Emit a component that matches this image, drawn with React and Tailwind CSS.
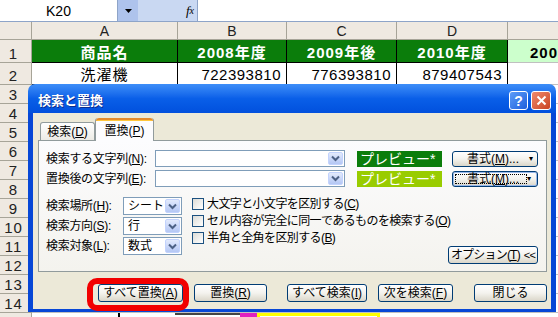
import React from 'react';

const U = ({ children }) => <span className="underline underline-offset-[1px]">{children}</span>;

const Chevron = () => (
  <svg width="9" height="7" viewBox="0 0 9 7">
    <path d="M1 1.5 L4.5 5 L8 1.5" fill="none" stroke="#4d6185" strokeWidth="2" />
  </svg>
);

const DropBtn = () => (
  <div className="flex h-full w-[15px] items-center justify-center rounded-[2px] border border-[#c3d3fd] bg-gradient-to-b from-[#e3eafc] to-[#b4c7f4]">
    <Chevron />
  </div>
);

const Combo = ({ className, text }) => (
  <div className={`flex shrink-0 items-stretch border border-[#7f9db9] bg-white p-[1px] ${className}`}>
    <div className="flex flex-1 items-center pl-[3px] text-[12px] leading-none">{text}</div>
    <DropBtn />
  </div>
);

const XpButton = ({ className, children }) => (
  <div
    className={`flex shrink-0 items-center justify-center whitespace-nowrap rounded-[3px] border border-[#003c74] bg-gradient-to-b from-white via-[#f4f3ee] to-[#dad6c9] text-[12px] leading-none text-black ${className}`}
  >
    {children}
  </div>
);

const Checkbox = ({ children }) => (
  <div className="flex h-[17px] items-center whitespace-nowrap text-[12px] leading-none tracking-[-0.6px]">
    <div className="mr-[2px] h-[12px] w-[12px] shrink-0 border border-[#1c5180] bg-gradient-to-br from-[#dcdcd7] to-white" />
    <span className="ml-[1px]">{children}</span>
  </div>
);

const cols = [146, 109, 110, 111, 120];
const colNames = ['A', 'B', 'C', 'D', 'E'];

const Cell = ({ w, className, children }) => (
  <div style={{ width: w }} className={`flex shrink-0 items-end overflow-hidden whitespace-nowrap border-r border-b pb-[2px] ${className}`}>
    {children}
  </div>
);

const RowHead = ({ h, n }) => (
  <div
    style={{ height: h }}
    className="flex w-[32px] shrink-0 items-end justify-center border-r border-b border-[#a7a498] bg-[#efe9e1] pb-[1px] pr-[4px] text-[15px] leading-none tracking-[1px] text-[#222]"
  >
    {n}
  </div>
);

export default function App() {
  const bodyRows = [3, 4, 5, 6, 7, 8, 9, 10, 11, 12, 13, 14];

  return (
    <div className="relative h-[317px] w-[558px] overflow-hidden bg-white font-['Liberation_Sans','Noto_Sans_CJK_JP',sans-serif] text-black">
      {/* formula bar */}
      <div className="flex h-[22px] border-b border-[#8ea4c8] bg-[#c9d8f2]">
        <div className="flex w-[118px] items-center justify-center border-r border-[#8ea4c8] bg-white text-[14px] leading-none">
          K20
        </div>
        <div className="flex w-[20px] items-center justify-center bg-[#aec3ec]">
          <svg width="7" height="4" viewBox="0 0 7 4">
            <path d="M0 0 H7 L3.5 4 Z" fill="#000" />
          </svg>
        </div>
        <div className="flex w-[59px] items-center justify-end pr-[3px] font-['Liberation_Serif',serif] text-[13px] italic leading-none">
          f<span className="text-[10px]">x</span>
        </div>
        <div className="flex-1 border-l border-[#8ea4c8] bg-white" />
      </div>

      {/* column headers */}
      <div className="flex h-[18px]">
        <div className="w-[32px] shrink-0 border-r border-b border-[#a7a498] bg-[#efe9e1]" />
        {cols.map((w, i) => (
          <div
            key={colNames[i]}
            style={{ width: w }}
            className="flex shrink-0 items-center justify-center border-r border-b border-[#a7a498] bg-[#efe9e1] text-[14px] leading-none text-[#222]"
          >
            {colNames[i]}
          </div>
        ))}
      </div>

      {/* row 1 */}
      <div className="flex">
        <RowHead h={23} n="1" />
        {['商品名', '2008年度', '2009年後', '2010年度'].map((t, i) => (
          <Cell
            key={t}
            w={cols[i]}
            className="justify-center border-black bg-[#0b7d0b] text-[15px] font-bold leading-none tracking-[1px] text-white"
          >
            {t}
          </Cell>
        ))}
        <Cell w={cols[4]} className="justify-start border-[#c0c0c0] bg-[#ccffcc] pl-[22px] text-[15px] font-bold leading-none tracking-[1px]">
          2008年度
        </Cell>
      </div>

      {/* row 2 */}
      <div className="flex">
        <RowHead h={22} n="2" />
        <Cell w={cols[0]} className="justify-center border-black text-[15px] leading-none tracking-[1px]">
          洗濯機
        </Cell>
        {['722393810', '776393810', '879407543'].map((t, i) => (
          <Cell key={t} w={cols[i + 1]} className="justify-end border-black pr-[5px] text-[15px] leading-none tracking-[0.5px]">
            {t}
          </Cell>
        ))}
        <Cell w={cols[4]} className="border-[#c0c0c0]" />
      </div>

      {/* rows 3-14 */}
      {bodyRows.map((n) => (
        <div key={n} className="flex">
          <RowHead h={19} n={String(n)} />
          {cols.map((w, i) => (
            <Cell key={i} w={w} className="border-[#c0c0c0]" />
          ))}
        </div>
      ))}

      {/* row 15 fragment */}
      <div className="flex h-[19px]">
        <div className="w-[32px] shrink-0 border-r border-[#a7a498] bg-[#efe9e1]" />
        <div className="w-[86px] shrink-0" />
        <div className="w-[2px] shrink-0 bg-black" />
        <div className="w-[55px] shrink-0" />
        <div className="w-[65px] shrink-0 border-t-2 border-[#444]" />
        <div className="w-[17px] shrink-0 bg-[#e020c0]" />
        <div className="w-[123px] shrink-0 border-x-[3px] border-t-[3px] border-[#ffff00]" />
      </div>

      {/* Find & Replace dialog */}
      <div className="absolute left-[28px] top-[84px] flex h-[228px] w-[528px] flex-col">
        <div className="flex h-[29px] items-center rounded-t-[7px] bg-gradient-to-b from-[#3d8ef8] via-[#0a5fe8] to-[#0250dd] pl-[10px] pr-[5px] pt-[4px]">
          <span className="text-[13px] font-bold leading-none text-white [text-shadow:1px_1px_0_#0b2c8c]">検索と置換</span>
          <div className="ml-auto flex gap-[3px]">
            <div className="flex h-[19px] w-[19px] items-center justify-center rounded-[3px] border border-white bg-gradient-to-br from-[#5c9cf8] to-[#1f5fdc] text-[14px] font-bold leading-none text-white">
              ?
            </div>
            <div className="flex h-[19px] w-[20px] items-center justify-center rounded-[3px] border border-white bg-gradient-to-br from-[#ef8a6c] to-[#c9401f]">
              <svg width="11" height="11" viewBox="0 0 11 11">
                <path d="M1.5 1.5 L9.5 9.5 M9.5 1.5 L1.5 9.5" stroke="#fff" strokeWidth="2" />
              </svg>
            </div>
          </div>
        </div>

        <div className="relative flex flex-1 flex-col border-x-[5px] border-b-[3px] border-[#0747d6] bg-[#ece9d8]">
          {/* tabs */}
          <div className="mt-[5px] flex h-[22px] items-end pl-[7px]">
            <div className="flex h-[18px] w-[55px] items-center justify-center rounded-t-[3px] border border-b-0 border-[#919b9c] bg-gradient-to-b from-white to-[#ecebe5] text-[12px] leading-none">
              検索(<U>D</U>)
            </div>
            <div className="relative z-10 -mb-px flex h-[23px] w-[59px] flex-col rounded-t-[3px] border-x border-[#919b9c] bg-[#fcfcfe]">
              <div className="h-[3px] rounded-t-[3px] border-t-2 border-[#e68b2c] bg-[#ffc73c]" />
              <div className="flex flex-1 items-center justify-center text-[12px] leading-none">
                置換(<U>P</U>)
              </div>
            </div>
          </div>

          {/* panel */}
          <div className="ml-[5px] flex h-[132px] w-[509px] flex-col border border-[#919b9c] bg-gradient-to-b from-[#fcfcfe] to-[#f4f3ee] pl-[7px] pt-[9px]">
            <div className="flex h-[17px] items-center">
              <div className="w-[109px] shrink-0 whitespace-nowrap text-[12px] leading-none tracking-[-0.3px]">
                検索する文字列(<U>N</U>):
              </div>
              <Combo className="h-[17px] w-[190px]" text="" />
              <div className="ml-[12px] flex h-[16px] w-[85px] items-center whitespace-nowrap bg-[#0b7d0b] pl-[3px] text-[14px] leading-none text-white">
                プレビュー*
              </div>
              <XpButton className="ml-[10px] h-[16px] w-[86px]">
                <span className="flex-1 pl-[4px] text-center">
                  書式(<U>M</U>)...
                </span>
                <span className="w-[8px] text-[8px]">▾</span>
              </XpButton>
            </div>
            <div className="mt-[3px] flex h-[17px] items-center">
              <div className="w-[109px] shrink-0 whitespace-nowrap text-[12px] leading-none tracking-[-0.3px]">
                置換後の文字列(<U>E</U>):
              </div>
              <Combo className="h-[17px] w-[190px]" text="" />
              <div className="ml-[12px] flex h-[16px] w-[85px] items-center whitespace-nowrap bg-[#99cc00] pl-[3px] text-[14px] leading-none text-white">
                プレビュー*
              </div>
              <XpButton className="ml-[10px] h-[16px] w-[86px] p-[2px] shadow-[inset_0_0_0_1px_#98b8ea]">
                <span className="flex h-full flex-1 items-center justify-center border border-dotted border-black pl-[4px]">
                  書式(<U>M</U>)...
                </span>
                <span className="w-[8px] text-[8px]">▾</span>
              </XpButton>
            </div>

            <div className="mt-[10px] flex">
              <div className="flex shrink-0 flex-col gap-[2px]">
                {[
                  ['検索場所', 'H', 'シート'],
                  ['検索方向', 'S', '行'],
                  ['検索対象', 'L', '数式'],
                ].map(([label, key, val]) => (
                  <div key={key} className="flex h-[18px] items-center">
                    <div className="w-[77px] shrink-0 whitespace-nowrap text-[12px] leading-none tracking-[-0.3px]">
                      {label}(<U>{key}</U>):
                    </div>
                    <Combo className="h-[18px] w-[59px]" text={val} />
                  </div>
                ))}
              </div>
              <div className="-mt-[2px] ml-[10px] flex w-[246px] shrink-0 flex-col">
                <Checkbox>
                  大文字と小文字を区別する(<U>C</U>)
                </Checkbox>
                <Checkbox>
                  セル内容が完全に同一であるものを検索する(<U>O</U>)
                </Checkbox>
                <Checkbox>
                  半角と全角を区別する(<U>B</U>)
                </Checkbox>
              </div>
              <div className="flex min-w-0 flex-1 justify-end pr-[8px] pt-[49px]">
                <XpButton className="h-[18px] w-[90px] tracking-[-0.8px]">
                  オプション(<U>T</U>)<span className="ml-[4px] text-[11px]">&lt;&lt;</span>
                </XpButton>
              </div>
            </div>
          </div>

          {/* bottom buttons */}
          <div className="ml-[65px] mt-[12px] flex h-[18px]">
            <XpButton className="w-[85px]">
              すべて置換(<U>A</U>)
            </XpButton>
            <XpButton className="ml-[11px] w-[73px]">
              置換(<U>R</U>)
            </XpButton>
            <XpButton className="ml-[20px] w-[80px]">
              すべて検索(<U>I</U>)
            </XpButton>
            <XpButton className="ml-[11px] w-[75px]">
              次を検索(<U>F</U>)
            </XpButton>
            <XpButton className="ml-[21px] w-[73px]">閉じる</XpButton>
          </div>

          {/* red annotation */}
          <div className="absolute left-[54px] top-[165px] h-[33px] w-[102px] rounded-[10px] border-[6px] border-[#f20000]" />
        </div>
      </div>
    </div>
  );
}
